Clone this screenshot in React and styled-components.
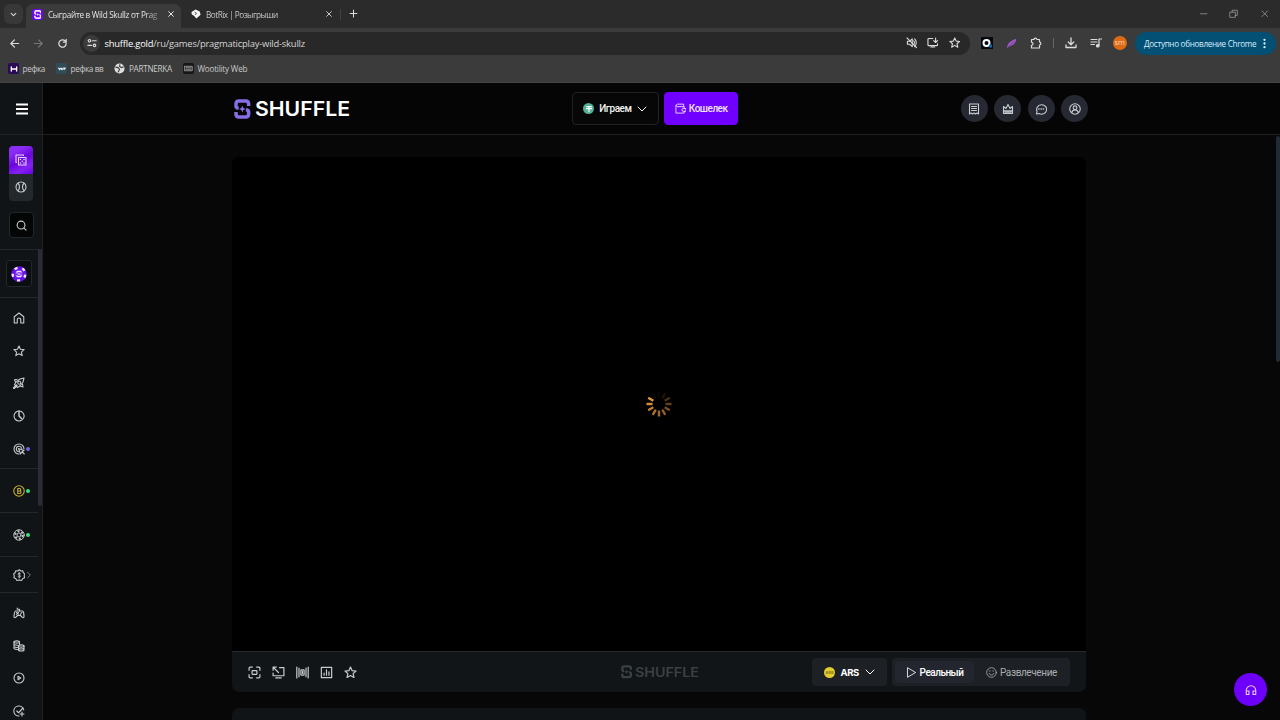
import React from "react";
import styled, { createGlobalStyle } from "styled-components";

const Global = createGlobalStyle`
  * { box-sizing: border-box; }
  body { margin: 0; background: #070707; overflow: hidden; }
`;

const Screen = styled.div`
  width: 1280px;
  height: 720px;
  overflow: hidden;
  display: flex;
  flex-direction: column;
  background: #070707;
  font-family: Roboto, "Liberation Sans", sans-serif;
`;

/* ---------- icons ---------- */

const Svg = styled.svg`
  display: block;
  flex: none;
  width: ${(p) => p.$size}px;
  height: ${(p) => p.$height || p.$size}px;
  color: ${(p) => p.$color || "inherit"};
`;

function Icon({ size = 12, color, width = 2.2, children }) {
  return (
    <Svg
      $size={size}
      $color={color}
      viewBox="0 0 24 24"
      fill="none"
      stroke="currentColor"
      strokeWidth={width}
      strokeLinecap="round"
      strokeLinejoin="round"
    >
      {children}
    </Svg>
  );
}

const STAR = "M12 2l3 6.6 7.2.7-5.4 4.8 1.6 7.1L12 17.5l-6.4 3.7 1.6-7.1L1.8 9.3 9 8.6z";

const glyphs = {
  chevron: <path d="M4 8l8 8 8-8" />,
  close: <path d="M5 5l14 14M19 5L5 19" />,
  plus: <path d="M12 3v18M3 12h18" />,
  back: <path d="M21 12H4M12 4l-8 8 8 8" />,
  forward: <path d="M3 12h17M12 4l8 8-8 8" />,
  reload: <path d="M20 12a8 8 0 1 1-2.4-5.7L20 8.600M20 3v6h-6" />,
  tune: (
    <>
      <circle cx="6" cy="6.500" r="3" />
      <path d="M13 6.500h9M2 17.500h9" />
      <circle cx="18" cy="17.500" r="3" />
    </>
  ),
  muted: (
    <>
      <path d="M3 9v6h4l6 5V4L7 9zM16 8c2 2 2 6 0 8M18 4c4.500 4 4.500 12 0 16" />
      <path d="M2 2l20 20" />
    </>
  ),
  install: <path d="M12 3H4a2 2 0 0 0-2 2v11a2 2 0 0 0 2 2h16a2 2 0 0 0 2-2v-2M8 21h8M18 2v9M14 7.500l4 4 4-4" />,
  star: <path d={STAR} />,
  puzzle: <path d="M3 5h5a3 2.600 0 0 1 6 0h5v5a2.600 3 0 0 1 0 6v6H3v-5.500a3 3 0 0 0 0-6z" />,
  download: <path d="M12 2v13M6.500 10l5.500 5.500 5.500-5.500M2 16v5h20v-5" />,
  queue: (
    <>
      <path d="M2 5h12M2 10h12M2 15h7" />
      <path d="M18 17V4h5" />
      <circle cx="15.500" cy="17.500" r="2.500" fill="currentColor" />
    </>
  ),
  minimize: <path d="M4 12h16" />,
  restore: <path d="M3 8h13v13H3zM8 8V3h13v13h-5" />,
  menu: <path d="M0 3h24M0 12h24M0 21h24" strokeLinecap="butt" />,
  dice: (
    <>
      <path d="M7 7h15v15H7zM3 17H2V2h15v1" />
      <g fill="currentColor" stroke="none">
        <circle cx="11" cy="11" r="1.600" />
        <circle cx="18" cy="11" r="1.600" />
        <circle cx="14.500" cy="14.500" r="1.600" />
        <circle cx="11" cy="18" r="1.600" />
        <circle cx="18" cy="18" r="1.600" />
      </g>
    </>
  ),
  ball: (
    <>
      <circle cx="12" cy="12" r="10" />
      <path d="M6 4.500c4 4 4 11 0 15M18 4.500c-4 4-4 11 0 15" />
    </>
  ),
  search: (
    <>
      <circle cx="11" cy="11" r="8.500" />
      <path d="M17.500 17.500L22 22" />
    </>
  ),
  home: <path d="M8.500 22H2.500V9.500L12 2l9.500 7.500V22h-6v-6.500a3.500 3.500 0 0 0-7 0z" />,
  rocket: (
    <>
      <path d="M22 2l-2 8-6 8-5 3-6-6 3-5 8-6z" />
      <circle cx="12.500" cy="11.500" r="3" />
      <path d="M8 5L3 5.500 5 10M19 14l1 6-6-2" />
      <path d="M2 22l5-5" strokeWidth="4.500" />
    </>
  ),
  clock: (
    <>
      <path d="M12 2a10 10 0 1 1-7 17" />
      <path d="M12 2a10 10 0 0 0-7 17" strokeDasharray="3.500 1.500" />
      <path d="M12 3v9l5 5" strokeWidth="3" />
    </>
  ),
  target: (
    <>
      <path d="M12 22A10 10 0 1 1 22 12M11 17.500A5.500 5.500 0 1 1 17.500 11" />
      <path d="M11 11l11 4-4 2.500 4.500 4.500M18 17.500l-3 4.500-4-11" />
    </>
  ),
  coinB: (
    <>
      <circle cx="12" cy="12" r="10.500" />
      <path d="M9.500 7h3.500a2.400 2.400 0 0 1 0 5H9.500zM9.500 12h4a2.500 2.500 0 0 1 0 5h-4z" />
    </>
  ),
  chip: (
    <>
      <circle cx="12" cy="12" r="10.500" />
      <circle cx="12" cy="12" r="4" />
      <circle cx="12" cy="12" r="7.500" strokeWidth="4" strokeDasharray="3.930 3.930" strokeLinecap="butt" />
    </>
  ),
  badge: (
    <>
      <path d="M12 1.500l3 2.300 3.800-.3 1 3.700 3 2.300-1.300 3.500.8 3.700-3.500 1.500L16.500 22 12 21l-4.500 1-2.300-3.800-3.500-1.500.8-3.700-1.300-3.500 3-2.300 1-3.700 3.800.3z" />
      <path d="M14.500 9c-1-1.500-5-1.200-5 .8 0 2.400 5 1.600 5 4.200 0 2-4 2.300-5 .5M12 6.500v11" strokeWidth="1.600" />
    </>
  ),
  game: (
    <>
      <path d="M5 8h14c2 0 3 8.500 3 11.500 0 2.500-2.500 2.500-4 .5L15 17H9l-3 3c-1.500 2-4 2-4-.5C2 16.500 3 8 5 8z" />
      <path d="M13 8V4.500H8.500V2M7 11l4 3.500M11 11l-4 3.500M17.500 11l-3 4" />
    </>
  ),
  coins: (
    <>
      <ellipse cx="7.500" cy="4" rx="5.500" ry="2.300" />
      <path d="M2 4v13c1 1.500 4 2 7 2M13 4v5M2 8.500c1 1.500 4 2 7 2M2 13c1 1.500 4 2 7 2" />
      <ellipse cx="16.500" cy="12" rx="5.500" ry="2.300" />
      <path d="M11 12v8.500c2 2 9 2 11 0V12M11 16.500c2 2 9 2 11 0" />
    </>
  ),
  playCircle: (
    <>
      <circle cx="12" cy="12" r="10" />
      <path d="M10 8.500v7l5.500-3.500z" />
    </>
  ),
  check: (
    <>
      <path d="M21.500 10A10 10 0 1 0 12 22" />
      <path d="M7.500 12l3.500 3.500L20 6M18 14v8M14 18h8" />
    </>
  ),
  wallet: (
    <>
      <path d="M19 8V2.500H5a2.800 2.800 0 0 0 0 5.500h15v4M2 5.500V22h18v-4" />
      <path d="M23 12h-5a3 3 0 0 0 0 6h5z" />
    </>
  ),
  receipt: <path d="M3 2h18v20l-3-2-3 2-3-2-3 2-3-2-3 2zM7 7h10M7 11h10M7 15h10" />,
  crown: (
    <>
      <path d="M3 16V7l5 4 4-8 4 8 5-4v9z" />
      <path d="M3 16h18v5H3zM6 18.500h12" />
    </>
  ),
  chat: (
    <>
      <path d="M3 22l1-5.500A10 9.500 0 1 1 8 21z" />
      <path d="M7.500 12h.5M12 12h.5M16.500 12h.5" strokeWidth="3" />
    </>
  ),
  user: (
    <>
      <circle cx="12" cy="12" r="10.500" />
      <circle cx="12" cy="9.500" r="3.700" />
      <path d="M5.500 19c1-4 4-5.300 6.500-5.300s5.500 1.300 6.500 5.300" />
    </>
  ),
  theatre: (
    <>
      <path d="M2 8V4a2 2 0 0 1 2-2h4M16 2h4a2 2 0 0 1 2 2v4M22 16v4a2 2 0 0 1-2 2h-4M8 22H4a2 2 0 0 1-2-2v-4" />
      <rect x="7.500" y="8.500" width="9" height="7" rx="1" />
    </>
  ),
  expand: <path d="M14 3h8v15H2v-5M2 8V2h6M2 2l10 10M7 22h10" />,
  broadcast: (
    <>
      <path d="M1.500 2v20M5.500 4v16M22.500 2v20M18.500 4v16" />
      <rect x="9" y="7" width="6" height="10" rx="1" />
      <path d="M12 10v4" />
    </>
  ),
  stats: <path d="M2.500 2.500h19v19h-19zM7.500 13v4M12 7v10M16.500 11v6" />,
  play: <path d="M4 2l17 10L4 22z" />,
  smile: (
    <>
      <circle cx="12" cy="12" r="10.500" />
      <path d="M7 14c1 5 9 5 10 0M8.500 8v1.500M15.500 8v1.500" />
    </>
  ),
  headphones: <path d="M4 21H2.500v-8a9.500 9.500 0 0 1 19 0v8H16v-7h5M3 14h5v7H4" />,
  right: <path d="M8 4l8 8-8 8" />,
};

function ShuffleMark({ size, color }) {
  return (
    <Svg $size={(size * 20) / 24} $height={size} viewBox="0 0 20 24" fill="none" stroke={color} strokeWidth="4.200">
      <path d="M17.600 8.500V6Q17.600 2.400 14 2.400H6Q2.400 2.400 2.400 6v2.800Q2.400 10.600 5.600 11.200" />
      <path d="M2.400 15.500V18Q2.400 21.600 6 21.600h8q3.600 0 3.600-3.600v-2.800q0-1.800-3.200-2.400" />
      <path d="M10 7.800l1.200 3 3 1.200-3 1.200-1.200 3-1.200-3-3-1.200 3-1.200z" fill={color} stroke="none" />
    </Svg>
  );
}

/* ---------- browser chrome ---------- */

const Chrome = styled.header`
  flex: none;
  height: 83px;
  background: #3b3b3b;
  color: #dcdcdc;
  font-family: "Open Sans", "Noto Sans", sans-serif;
  font-size: 8px;
  border-bottom: 1px solid #444;
`;

const TabStrip = styled.div`
  height: 28px;
  background: #2b2b2b;
  display: flex;
  align-items: flex-start;
  padding: 4px 8px 0 4px;
`;

const TabSearch = styled.div`
  width: 19px;
  height: 20px;
  border-radius: 6px;
  background: #383838;
  display: grid;
  place-items: center;
`;

const Tab = styled.div`
  display: flex;
  align-items: center;
  width: ${(p) => p.$width}px;
  height: ${(p) => (p.$active ? 24 : 20)}px;
  padding: ${(p) => (p.$active ? "0 6px 4px 6px" : "0 7px 0 9px")};
  margin-left: ${(p) => (p.$active ? 3 : 0)}px;
  border-radius: 7px 7px 0 0;
  background: ${(p) => (p.$active ? "#3b3b3b" : "transparent")};
  color: ${(p) => (p.$active ? "#e3e3e3" : "#c7c7c7")};
`;

const TabTitle = styled.span`
  flex: 1;
  margin-left: 5px;
  font-size: 8.2px;
  letter-spacing: ${(p) => p.$track}px;
  white-space: nowrap;
  mask-image: linear-gradient(90deg, #000 98px, rgba(0, 0, 0, 0.25) 111px);
`;

const Favicon = styled.span`
  flex: none;
  width: 11px;
  height: 11px;
  border-radius: 2px;
  display: grid;
  place-items: center;
  background: ${(p) => p.$bg};
`;

const TabDivider = styled.span`
  width: 1px;
  height: 11px;
  margin: 5px 7px 0 0;
  background: #414141;
`;

const NewTab = styled.div`
  margin: 5px 0 0 1px;
`;

const WindowButtons = styled.div`
  margin: 5px 3px 0 auto;
  display: flex;
  gap: 21px;
  color: #a5a5a5;
`;

const Toolbar = styled.div`
  height: 30px;
  display: flex;
  align-items: center;
  padding: 0 4px 0 9px;
`;

const NavButtons = styled.div`
  display: flex;
  gap: 13px;
  width: 71px;
`;

const Omnibox = styled.div`
  width: 890px;
  flex: none;
  height: 23px;
  border-radius: 12px;
  background: #282828;
  display: flex;
  align-items: center;
  padding: 0 10px 0 3px;
`;

const SiteInfo = styled.span`
  width: 17px;
  height: 17px;
  border-radius: 50%;
  background: #3b3b3b;
  display: grid;
  place-items: center;
`;

const Url = styled.span`
  margin-left: 4.5px;
  flex: 1;
  font-size: 9.4px;
  letter-spacing: -0.2px;
  color: #d5d5d5;
  b { font-weight: 400; color: #fff; }
`;

const OmniboxActions = styled.div`
  display: flex;
  gap: 10px;
`;

const Extensions = styled.div`
  display: flex;
  align-items: center;
  margin-left: 11px;
  gap: 12.8px;
`;

const ToolDivider = styled.span`
  width: 1px;
  height: 10px;
  background: #666;
  margin: 0 -2px 0 -1px;
`;

const ExtensionTile = styled.span`
  width: 12px;
  height: 12px;
  background: #060a10;
`;

const Avatar = styled.span`
  width: 14px;
  height: 14px;
  flex: none;
  border-radius: 50%;
  background: #df6a12;
  color: #f6d8bc;
  font-size: 7.5px;
  line-height: 12px;
  text-align: center;
  margin-left: -2px;
`;

const UpdatePill = styled.div`
  margin-left: auto;
  width: 141px;
  height: 23px;
  flex: none;
  border-radius: 12px;
  background: #044f74;
  color: #d5eefc;
  font-size: 8.1px;
  letter-spacing: -0.3px;
  white-space: nowrap;
  display: flex;
  align-items: center;
  justify-content: space-between;
  padding: 0 6px 0 9px;
`;

const Bookmarks = styled.div`
  height: 21px;
  display: flex;
  align-items: center;
  gap: 11px;
  padding-left: 8px;
`;

const Bookmark = styled.div`
  display: flex;
  align-items: center;
  gap: 3.5px;
  font-size: 8.2px;
  letter-spacing: ${(p) => p.$track}px;
  color: #c9c9c9;
  white-space: nowrap;
`;

/* ---------- page shell ---------- */

const Page = styled.div`
  flex: 1;
  display: flex;
  min-height: 0;
  position: relative;
`;

const Sidebar = styled.aside`
  width: 43px;
  flex: none;
  background: #101416;
  border-right: 1px solid #1e2224;
  color: #c8cbcd;
  display: flex;
  flex-direction: column;
`;

const MenuButton = styled.div`
  height: 52px;
  flex: none;
  display: grid;
  place-items: center;
  padding-left: 1px;
  color: #fff;
  border-bottom: 1px solid #202426;
`;

const ModeSwitch = styled.div`
  margin: 11px 0 0 9px;
  width: 24px;
  height: 55px;
  border-radius: 4px;
  background: #22282c;
  overflow: hidden;
  flex: none;
`;

const Mode = styled.div`
  height: 27.5px;
  display: grid;
  place-items: center;
  color: ${(p) => (p.$active ? "#e6d2ff" : "#c8cbcd")};
  background: ${(p) => (p.$active ? "linear-gradient(150deg, #8b2df4 0 22%, #6905dd 50%, #8421f0 75%, #6600e6)" : "transparent")};
`;

const SearchButton = styled.div`
  margin: 11px 0 11px 9px;
  width: 25px;
  height: 26px;
  flex: none;
  border-radius: 4px;
  border: 1px solid #22272a;
  background: #040505;
  display: grid;
  place-items: center;
`;

const SideScroll = styled.div`
  flex: 1;
  min-height: 0;
  display: flex;
  border-top: 1px solid #23282b;
`;

const SideList = styled.div`
  width: 38px;
  overflow: hidden;
`;

const SideThumb = styled.div`
  width: 4px;
  height: 256px;
  background: #2a2b35;
  border-radius: 0 0 2px 2px;
`;

const SideGroup = styled.div`
  height: ${(p) => p.$height}px;
  padding-top: ${(p) => p.$top}px;
  border-bottom: 1px solid #23282b;
`;

const SideItem = styled.div`
  height: 32.8px;
  padding-left: 12.5px;
  display: flex;
  align-items: center;
  gap: ${(p) => p.$gap ?? 1.5}px;
  color: ${(p) => p.$color || "inherit"};
`;

const Dot = styled.i`
  width: 4px;
  height: 4px;
  border-radius: 50%;
  background: ${(p) => p.$color};
`;

const ChipButton = styled.div`
  margin-left: 6px;
  width: 26px;
  height: 27px;
  border: 1px solid #22272a;
  border-radius: 3px;
  background: #0b0e10;
  display: grid;
  place-items: center;
`;

const Main = styled.main`
  flex: 1;
  min-width: 0;
  display: flex;
  flex-direction: column;
`;

const SiteHeader = styled.div`
  height: 52px;
  flex: none;
  background: #050505;
  border-bottom: 1px solid #1f2020;
  display: flex;
  align-items: center;
  padding-left: 191px;
`;

const Brand = styled.div`
  display: flex;
  align-items: center;
  gap: ${(p) => p.$gap}px;
  width: ${(p) => p.$width}px;
`;

const Wordmark = styled.svg`
  display: block;
  overflow: visible;
  font-family: Inter, "Liberation Sans", sans-serif;
  font-weight: 600;
`;

const HeaderButton = styled.div`
  width: ${(p) => p.$width}px;
  height: 33px;
  border-radius: 4px;
  border: 1px solid ${(p) => (p.$primary ? "#7000ff" : "#222")};
  background: ${(p) => (p.$primary ? "#7000ff" : "#070707")};
  color: ${(p) => (p.$primary ? "#f0e2ff" : "#f2f2f2")};
  display: flex;
  align-items: center;
  justify-content: center;
  gap: ${(p) => p.$gap}px;
  margin-right: 5px;
  font-size: 10px;
  font-weight: 500;
  letter-spacing: -0.5px;
`;

const Tether = styled.span`
  width: 11px;
  height: 11px;
  border-radius: 50%;
  background: #50af95;
  display: grid;
  place-items: center;
`;

const HeaderActions = styled.div`
  margin-left: 218px;
  display: flex;
  gap: 6.4px;
`;

const RoundButton = styled.div`
  width: 27px;
  height: 27px;
  border-radius: 50%;
  background: #272932;
  color: #c8cbd2;
  display: grid;
  place-items: center;
`;

const Content = styled.div`
  padding: 22px 0 0 189px;
`;

const GameCard = styled.section`
  width: 854px;
  height: 535px;
  border-radius: 7px;
  overflow: hidden;
  background: #000;
  display: flex;
  flex-direction: column;
`;

const Stage = styled.div`
  flex: 1;
  display: grid;
  place-items: center;
`;

const ControlBar = styled.div`
  height: 41px;
  border-top: 1px solid #26292b;
  background: #111517;
  display: flex;
  align-items: center;
  padding: 0 16px 0 15.5px;
`;

const Controls = styled.div`
  display: flex;
  gap: 11px;
  width: 373px;
  color: #c9cccd;
`;

const Currency = styled.div`
  width: 75px;
  height: 28px;
  border-radius: 4px;
  background: #1d2125;
  display: flex;
  align-items: center;
  padding-left: 12px;
  color: #fff;
  font-family: Inter, sans-serif;
  font-weight: 700;
  font-size: 9.6px;
  letter-spacing: -0.45px;
`;

const CurrencyCode = styled.span`
  margin: 0 5px 0 5.5px;
  width: 18px;
`;

const ArsCoin = styled.span`
  width: 11px;
  height: 11px;
  border-radius: 50%;
  background: #e2cc2e;
  color: #877617;
  font-size: 4px;
  line-height: 11px;
  letter-spacing: -0.1px;
  text-align: center;
`;

const PlayMode = styled.div`
  margin-left: 5px;
  width: 178px;
  flex: none;
  height: 28px;
  border-radius: 4px;
  background: #1d2125;
  display: flex;
  padding: 3px;
`;

const PlayOption = styled.div`
  display: flex;
  flex: none;
  align-items: center;
  justify-content: center;
  gap: 3px;
  width: ${(p) => p.$width}px;
  border-radius: 4px;
  background: ${(p) => (p.$active ? "#23262e" : "transparent")};
  color: ${(p) => (p.$active ? "#fff" : "#abadb0")};
  font-size: 10px;
  font-weight: ${(p) => (p.$active ? 500 : 400)};
  letter-spacing: ${(p) => p.$track}px;
  white-space: nowrap;
`;

const NextCard = styled.section`
  margin-top: 16px;
  width: 854px;
  height: 40px;
  border-radius: 7px 7px 0 0;
  background: #101416;
`;

const PageThumb = styled.div`
  position: absolute;
  right: 0;
  top: 53px;
  width: 4px;
  height: 226px;
  background: #202b35;
  border-radius: 2px;
`;

const SupportButton = styled.div`
  position: absolute;
  right: 13px;
  bottom: 14px;
  width: 33px;
  height: 33px;
  border-radius: 50%;
  background: #6d00fa;
  color: #e9c9ff;
  display: grid;
  place-items: center;
`;

const SPOKES = [0.04, 0.12, 0.3, 0.4, 0.5, 0.6, 0.66, 0.72, 0.8, 0.88, 0.95, 0.04];

function Spinner() {
  return (
    <Svg $size={28} viewBox="-14 -14 28 28">
      {SPOKES.map((o, i) => (
        <rect
          key={i}
          x="-1.200"
          y="-12.500"
          width="2.400"
          height="6"
          rx="0.500"
          fill="#f0a040"
          opacity={o}
          transform={`rotate(${i * 30})`}
        />
      ))}
    </Svg>
  );
}

function PokerChip() {
  return (
    <Svg $size={16} viewBox="0 0 24 24">
      <circle cx="12" cy="12" r="11.500" fill="#6a10ea" />
      <circle cx="12" cy="12" r="9.500" fill="none" stroke="#f0e6ff" strokeWidth="3.600" strokeDasharray="4.500 7.440" strokeDashoffset="-1" />
      <circle cx="12" cy="12" r="5.800" fill="#8a40f2" />
      <path d="M15 10V8H9v3M9 14v2h6v-3M12 10.500v3" fill="none" stroke="#fff" strokeWidth="1.500" />
    </Svg>
  );
}

function Name({ width, size, color }) {
  return (
    <Wordmark width={width} height={size} viewBox={`0 0 ${width} ${size}`}>
      <text x="-1" y={size * 0.87} fontSize={size} fill={color} textLength={width + 1} lengthAdjust="spacingAndGlyphs">
        SHUFFLE
      </text>
    </Wordmark>
  );
}

const windowIcons = ["minimize", "restore", "close"];
const headerIcons = ["receipt", "crown", "chat", "user"];
const controlIcons = ["theatre", "expand", "broadcast", "stats", "star"];

export default function App() {
  return (
    <Screen>
      <Global />
      <Chrome>
        <TabStrip>
          <TabSearch>
            <Icon size={7} width={3.5}>{glyphs.chevron}</Icon>
          </TabSearch>
          <Tab $active $width={155}>
            <Favicon $bg="#6c08e8">
              <ShuffleMark size={9} color="#f1e6ff" />
            </Favicon>
            <TabTitle $track={-0.3}>Сыграйте в Wild Skullz от Prag</TabTitle>
            <Icon size={8} width={3}>{glyphs.close}</Icon>
          </Tab>
          <Tab $width={159}>
            <Favicon $bg="transparent">
              <Svg $size={10} viewBox="0 0 24 24">
                <path d="M1 7l10-6 10 5 2 8-10 9-6-7-5-3z" fill="#f4f4f4" />
                <path d="M9 8l4 2-3 4" stroke="#333" strokeWidth="2" fill="none" />
              </Svg>
            </Favicon>
            <TabTitle $track={-0.5}>BotRix | Розыгрыши</TabTitle>
            <Icon size={8} width={3}>{glyphs.close}</Icon>
          </Tab>
          <TabDivider />
          <NewTab>
            <Icon size={9} width={2.8}>{glyphs.plus}</Icon>
          </NewTab>
          <WindowButtons>
            {windowIcons.map((n) => (
              <Icon key={n} size={9.5} width={1.8}>{glyphs[n]}</Icon>
            ))}
          </WindowButtons>
        </TabStrip>
        <Toolbar>
          <NavButtons>
            <Icon size={11} width={2.6}>{glyphs.back}</Icon>
            <Icon size={11} width={2.4} color="#777">{glyphs.forward}</Icon>
            <Icon size={11} width={2.8}>{glyphs.reload}</Icon>
          </NavButtons>
          <Omnibox>
            <SiteInfo>
              <Icon size={10} width={2.8}>{glyphs.tune}</Icon>
            </SiteInfo>
            <Url><b>shuffle.gold</b>/ru/games/pragmaticplay-wild-skullz</Url>
            <OmniboxActions>
              <Icon size={11.5} width={2.3}>{glyphs.muted}</Icon>
              <Icon size={11.5} width={2.3}>{glyphs.install}</Icon>
              <Icon size={11.5} width={2.3}>{glyphs.star}</Icon>
            </OmniboxActions>
          </Omnibox>
          <Extensions>
            <ExtensionTile>
              <Svg $size={12} viewBox="0 0 24 24">
                <circle cx="11" cy="12" r="6" fill="none" stroke="#fff" strokeWidth="4" />
                <circle cx="19" cy="18" r="3.500" fill="#1768a8" />
              </Svg>
            </ExtensionTile>
            <Svg $size={11} viewBox="0 0 24 24">
              <path d="M2 23C2 13 10 5 22 2c0 8-6 14-16 17z" fill="#a45bd0" />
              <path d="M3 22L18 7" stroke="#4d3160" strokeWidth="1.600" />
            </Svg>
            <Icon size={12} width={2.4}>{glyphs.puzzle}</Icon>
            <ToolDivider />
            <Icon size={12} width={2.6}>{glyphs.download}</Icon>
            <Icon size={12} width={2.4}>{glyphs.queue}</Icon>
            <Avatar>sm</Avatar>
          </Extensions>
          <UpdatePill>
            Доступно обновление Chrome
            <Svg $size={11} viewBox="0 0 24 24" fill="currentColor">
              <circle cx="12" cy="4" r="2.500" />
              <circle cx="12" cy="12" r="2.500" />
              <circle cx="12" cy="20" r="2.500" />
            </Svg>
          </UpdatePill>
        </Toolbar>
        <Bookmarks>
          <Bookmark $track={-0.35}>
            <Favicon $bg="#2a0a55">
              <Icon size={8} width={4} color="#fff"><path d="M4 6v12M20 6v12M4 12h16" /></Icon>
            </Favicon>
            рефка
          </Bookmark>
          <Bookmark $track={-0.35}>
            <Favicon $bg="#2f4d59">
              <Icon size={8} width={3.5} color="#e3eef2"><path d="M2 9l3 5 4-5 3 5 4-5h6l-4 5" /></Icon>
            </Favicon>
            рефка вв
          </Bookmark>
          <Bookmark $track={-0.3}>
            <Svg $size={11} viewBox="0 0 24 24">
              <circle cx="12" cy="12" r="11" fill="#dedede" />
              <path d="M3 9l6 1 3 4-3 6M13 3l-1 4 4 3 5-2" stroke="#3b3b3b" strokeWidth="2.400" fill="none" />
            </Svg>
            PARTNERKA
          </Bookmark>
          <Bookmark $track={-0.23}>
            <Favicon $bg="#161616">
              <Icon size={9} width={2} color="#bbb"><path d="M2 6h20v12H2zM5 10h14M5 14h14" /></Icon>
            </Favicon>
            Wootility Web
          </Bookmark>
        </Bookmarks>
      </Chrome>

      <Page>
        <Sidebar>
          <MenuButton>
            <Icon size={12} width={3.8}>{glyphs.menu}</Icon>
          </MenuButton>
          <ModeSwitch>
            <Mode $active><Icon size={12}>{glyphs.dice}</Icon></Mode>
            <Mode><Icon size={12}>{glyphs.ball}</Icon></Mode>
          </ModeSwitch>
          <SearchButton>
            <Icon size={11} width={2.4}>{glyphs.search}</Icon>
          </SearchButton>
          <SideScroll>
            <SideList>
              <SideGroup $height={48} $top={10}>
                <ChipButton><PokerChip /></ChipButton>
              </SideGroup>
              <SideGroup $height={171} $top={3.5}>
                <SideItem><Icon>{glyphs.home}</Icon></SideItem>
                <SideItem><Icon>{glyphs.star}</Icon></SideItem>
                <SideItem><Icon>{glyphs.rocket}</Icon></SideItem>
                <SideItem><Icon>{glyphs.clock}</Icon></SideItem>
                <SideItem><Icon>{glyphs.target}</Icon><Dot $color="#7663e8" /></SideItem>
              </SideGroup>
              <SideGroup $height={44} $top={5.5}>
                <SideItem $color="#c9ae2c"><Icon>{glyphs.coinB}</Icon><Dot $color="#3fe07c" /></SideItem>
              </SideGroup>
              <SideGroup $height={44} $top={5.5}>
                <SideItem><Icon width={1.9}>{glyphs.chip}</Icon><Dot $color="#3fe07c" /></SideItem>
              </SideGroup>
              <SideGroup $height={36} $top={1.5}>
                <SideItem $gap={0}>
                  <Icon size={12.5} width={2}>{glyphs.badge}</Icon>
                  <Icon size={8} width={2.6} color="#8d9193">{glyphs.right}</Icon>
                </SideItem>
              </SideGroup>
              <SideGroup $height={180} $top={3.5}>
                <SideItem><Icon>{glyphs.game}</Icon></SideItem>
                <SideItem><Icon>{glyphs.coins}</Icon></SideItem>
                <SideItem><Icon>{glyphs.playCircle}</Icon></SideItem>
                <SideItem><Icon>{glyphs.check}</Icon></SideItem>
              </SideGroup>
            </SideList>
            <SideThumb />
          </SideScroll>
        </Sidebar>

        <Main>
          <SiteHeader>
            <Brand $gap={5} $width={338.4}>
              <ShuffleMark size={20} color="#876ee6" />
              <Name width={94} size={19.5} color="#fff" />
            </Brand>
            <HeaderButton $width={87} $gap={5}>
              <Tether>
                <Icon size={8} width={3.5} color="#fff"><path d="M5 5h14M12 5v15M4 11h16" /></Icon>
              </Tether>
              Играем
              <Icon size={12} width={2}>{glyphs.chevron}</Icon>
            </HeaderButton>
            <HeaderButton $primary $width={73.6} $gap={3}>
              <Icon size={11} width={2}>{glyphs.wallet}</Icon>
              Кошелек
            </HeaderButton>
            <HeaderActions>
              {headerIcons.map((n) => (
                <RoundButton key={n}><Icon size={12}>{glyphs[n]}</Icon></RoundButton>
              ))}
            </HeaderActions>
          </SiteHeader>
          <Content>
            <GameCard>
              <Stage><Spinner /></Stage>
              <ControlBar>
                <Controls>
                  {controlIcons.map((n) => (
                    <Icon key={n} size={13}>{glyphs[n]}</Icon>
                  ))}
                </Controls>
                <Brand $gap={4} $width={191.5}>
                  <ShuffleMark size={13.5} color="#3b4043" />
                  <Name width={63} size={12.5} color="#3b4043" />
                </Brand>
                <Currency>
                  <ArsCoin>ARS</ArsCoin>
                  <CurrencyCode>ARS</CurrencyCode>
                  <Icon size={12} width={2}>{glyphs.chevron}</Icon>
                </Currency>
                <PlayMode>
                  <PlayOption $active $width={79} $track={-0.5}>
                    <Icon size={11} width={1.8}>{glyphs.play}</Icon>
                    Реальный
                  </PlayOption>
                  <PlayOption $width={95} $track={-0.38}>
                    <Icon size={11} width={1.8}>{glyphs.smile}</Icon>
                    Развлечение
                  </PlayOption>
                </PlayMode>
              </ControlBar>
            </GameCard>
            <NextCard />
          </Content>
        </Main>
        <PageThumb />
        <SupportButton>
          <Icon size={12}>{glyphs.headphones}</Icon>
        </SupportButton>
      </Page>
    </Screen>
  );
}
